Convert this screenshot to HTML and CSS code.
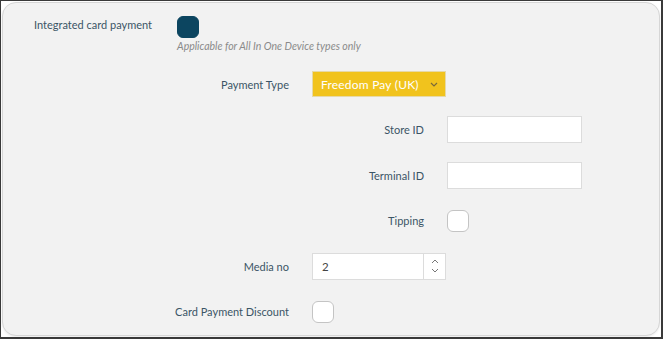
FILE: index.html
```html
<!DOCTYPE html>
<html>
<head>
<meta charset="utf-8">
<link rel="stylesheet" href="styles.css">
</head>
<body>
<div class="frame">
  <div class="card">
    <div class="row row-top lvl1">
      <div class="label label-left">Integrated card payment</div>
      <div class="control">
        <div class="check checked"></div>
        <div class="hint">Applicable for All In One Device types only</div>
      </div>
    </div>

    <div class="row lvl2 first-sub">
      <div class="label">Payment Type</div>
      <div class="select">
        <span>Freedom Pay (UK)</span>
        <svg class="chev" width="8" height="5" viewBox="0 0 8 5"><path d="M1 1 L4 4 L7 1" fill="none" stroke="#7a6a3a" stroke-width="1.2"/></svg>
      </div>
    </div>

    <div class="row lvl3">
      <div class="label">Store ID</div>
      <div class="input"></div>
    </div>

    <div class="row lvl3">
      <div class="label">Terminal ID</div>
      <div class="input"></div>
    </div>

    <div class="row lvl3">
      <div class="label">Tipping</div>
      <div class="check"></div>
    </div>

    <div class="row lvl2">
      <div class="label">Media no</div>
      <div class="input number">
        <span class="val">2</span>
        <div class="spin">
          <svg width="8" height="5" viewBox="0 0 8 5"><path d="M1 4 L4 1 L7 4" fill="none" stroke="#777" stroke-width="1"/></svg>
          <svg width="8" height="5" viewBox="0 0 8 5"><path d="M1 1 L4 4 L7 1" fill="none" stroke="#777" stroke-width="1"/></svg>
        </div>
      </div>
    </div>

    <div class="row lvl2">
      <div class="label">Card Payment Discount</div>
      <div class="check"></div>
    </div>
  </div>
</div>
</body>
</html>
```

FILE: styles.css
```css
html, body {
  margin: 0;
  padding: 0;
}
body {
  width: 663px;
  height: 339px;
  overflow: hidden;
  font-family: "Lato", "Noto Sans", sans-serif;
}
.frame {
  box-sizing: border-box;
  width: 663px;
  height: 339px;
  border-style: solid;
  border-color: #3a3a3a;
  border-width: 1px 2px 2px 1px;
  background: #ffffff;
  padding: 1px;
}
.card {
  box-sizing: border-box;
  height: 100%;
  background: #f2f2f2;
  border: 1px solid #d6d6d6;
  border-radius: 14px;
  padding-top: 11px;
  box-shadow: 0 1px 2px rgba(0,0,0,0.08);
}
.row {
  display: flex;
  align-items: center;
  gap: 23px;
  height: 26px;
  margin-bottom: 19.6px;
}
.row-top {
  align-items: flex-start;
  height: auto;
  margin-bottom: 19px;
}
.lvl1 { padding-left: 31px; }
.lvl2 { padding-left: 166px; }
.lvl3 { padding-left: 301px; }
.label {
  width: 120px;
  flex: none;
  text-align: right;
  font-size: 11px;
  color: #3b5566;
  white-space: nowrap;
}
.label-left {
  text-align: left;
  line-height: 22px;
  margin-top: 0;
}
.control {
  display: flex;
  flex-direction: column;
  gap: 2px;
}
.check {
  box-sizing: border-box;
  width: 22px;
  height: 22px;
  border: 1px solid #c4c4c4;
  border-radius: 6px;
  background: #ffffff;
}
.check.checked {
  background: #0c4560;
  border-color: #0c4560;
  margin-top: 2px;
}
.hint {
  font-size: 10.5px;
  font-style: italic;
  color: #8a8a8a;
}
.select {
  box-sizing: border-box;
  width: 134px;
  height: 26px;
  background: #f1c31d;
  border: 1px solid #e6d9a8;
  display: flex;
  align-items: center;
  justify-content: space-between;
  padding: 0 7px 0 8px;
  color: #ffffff;
  font-size: 12px;
  letter-spacing: 0.2px;
}
.chev { margin-top: 1px; }
.input {
  box-sizing: border-box;
  width: 135px;
  height: 27px;
  background: #ffffff;
  border: 1px solid #dcdcdc;
}
.input.number {
  width: 134px;
  display: flex;
  align-items: stretch;
}
.val {
  flex: 1;
  font-size: 11.5px;
  color: #444;
  padding-left: 9px;
  display: flex;
  align-items: center;
}
.spin {
  width: 21px;
  border-left: 1px solid #dcdcdc;
  display: flex;
  flex-direction: column;
  align-items: center;
  justify-content: center;
  gap: 4px;
}
```
